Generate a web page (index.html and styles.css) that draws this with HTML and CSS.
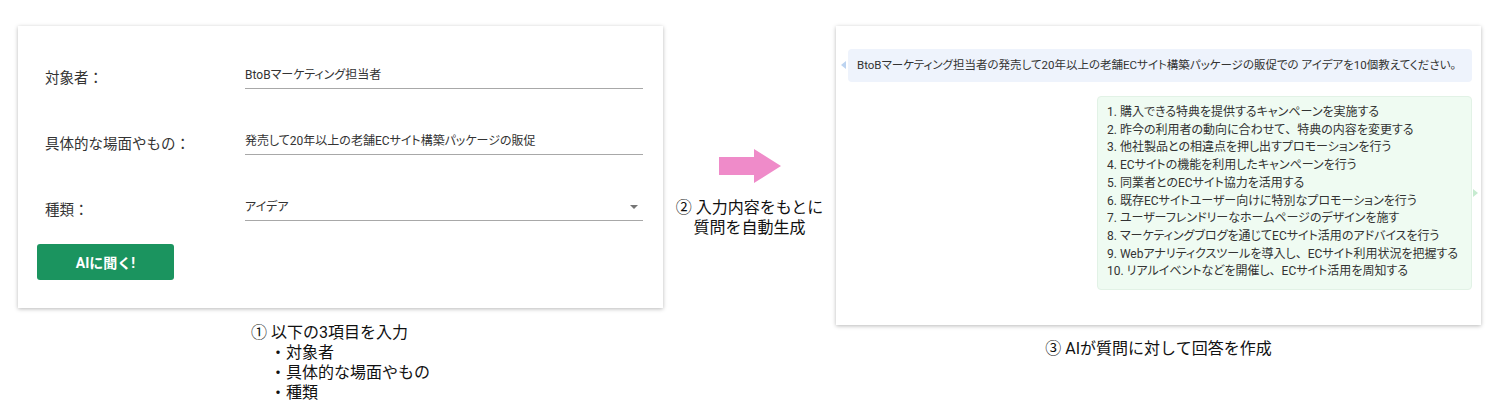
FILE: index.html
```html
<!DOCTYPE html>
<html>
<head>
    <title>AIアイデア生成</title>
    <link rel="stylesheet" href="styles.css">
</head>
<body>
    <div class="page">
        <div class="column">
            <div class="card form-card">
                <div class="row">
                    <label class="label">対象者：</label>
                    <div class="field">BtoBマーケティング担当者</div>
                </div>
                <div class="row">
                    <label class="label">具体的な場面やもの：</label>
                    <div class="field">発売して20年以上の老舗ECサイト構築パッケージの販促</div>
                </div>
                <div class="row">
                    <label class="label">種類：</label>
                    <div class="field select">
                        <span>アイデア</span>
                        <svg class="caret" width="8" height="4" viewBox="0 0 8 4"><polygon points="0,0 8,0 4,4" fill="#757575"/></svg>
                    </div>
                </div>
                <button class="ask">AIに聞く!</button>
            </div>
            <div class="caption">
                <div class="caption-block">
                    <p>① 以下の3項目を入力</p>
                    <p class="item">・対象者</p>
                    <p class="item">・具体的な場面やもの</p>
                    <p class="item">・種類</p>
                </div>
            </div>
        </div>

        <div class="middle">
            <svg class="arrow" width="62" height="34" viewBox="0 0 62 34">
                <polygon points="0,8 35,8 35,0 62,17 35,34 35,26 0,26" fill="#ef8bc9"/>
            </svg>
            <p class="step">② 入力内容をもとに<br>質問を自動生成</p>
        </div>

        <div class="column">
            <div class="card chat-card">
                <div class="bubble question">BtoBマーケティング担当者の発売して20年以上の老舗ECサイト構築パッケージの販促での アイデアを10個教えてください。</div>
                <div class="bubble answer">
                    <p>1. 購入できる特典を提供するキャンペーンを実施する</p>
                    <p>2. 昨今の利用者の動向に合わせて<span class="punct">、</span>特典の内容を変更する</p>
                    <p>3. 他社製品との相違点を押し出すプロモーションを行う</p>
                    <p>4. ECサイトの機能を利用したキャンペーンを行う</p>
                    <p>5. 同業者とのECサイト協力を活用する</p>
                    <p>6. 既存ECサイトユーザー向けに特別なプロモーションを行う</p>
                    <p>7. ユーザーフレンドリーなホームページのデザインを施す</p>
                    <p>8. マーケティングブログを通じてECサイト活用のアドバイスを行う</p>
                    <p>9. Webアナリティクスツールを導入し<span class="punct">、</span>ECサイト利用状況を把握する</p>
                    <p>10. リアルイベントなどを開催し<span class="punct">、</span>ECサイト活用を周知する</p>
                </div>
            </div>
            <div class="caption">
                <p>③ AIが質問に対して回答を作成</p>
            </div>
        </div>
    </div>
</body>
</html>
```

FILE: styles.css
```css
body {
    margin: 0;
    background: #fff;
    font-family: Roboto, "Noto Sans CJK JP", sans-serif;
    color: #333;
}
p {
    margin: 0;
}
.page {
    display: flex;
    padding: 26px 0 0 18px;
}
.column {
    width: 645px;
    display: flex;
    flex-direction: column;
}
.card {
    background: #fff;
    box-shadow: 0 1px 4px rgba(0, 0, 0, 0.28);
}
.form-card {
    padding: 36px 20px 28px 19px;
}
.row {
    display: flex;
    align-items: flex-end;
    margin-left: 8px;
    height: 27px;
}
.row + .row {
    margin-top: 39px;
}
.label {
    width: 200px;
    font-size: 14.5px;
    line-height: 20px;
    color: #333;
}
.field {
    flex: 1;
    height: 26px;
    line-height: 26px;
    font-size: 12px;
    font-feature-settings: "palt";
    color: #333;
    border-bottom: 1px solid #a8a8a8;
}
.select {
    display: flex;
    align-items: center;
    justify-content: space-between;
}
.caret {
    margin-right: 5px;
}
.ask {
    display: block;
    margin-top: 23px;
    width: 137px;
    height: 36px;
    border: none;
    border-radius: 3px;
    background: #1b945f;
    color: #fff;
    font-family: Roboto, "Noto Sans CJK JP", sans-serif;
    font-size: 14px;
    font-weight: bold;
}
.caption {
    margin-top: 15px;
    text-align: center;
    font-size: 16px;
    line-height: 20px;
    color: #111;
}
.caption-block {
    display: inline-block;
    text-align: left;
}
.caption-block .item {
    padding-left: 19px;
}
.middle {
    width: 173px;
    display: flex;
    flex-direction: column;
    align-items: center;
    padding-top: 123px;
}
.step {
    margin-top: 15px;
    text-align: center;
    font-size: 16px;
    line-height: 20px;
    color: #111;
}
.chat-card {
    padding: 23px 9px 35px 12px;
    display: flex;
    flex-direction: column;
    align-items: flex-end;
}
.bubble {
    position: relative;
    border-radius: 4px;
    font-size: 12px;
    font-feature-settings: "palt";
    color: #333;
}
.punct {
    font-feature-settings: normal;
}
.question {
    align-self: stretch;
    height: 33px;
    line-height: 33px;
    padding-left: 9px;
    font-size: 11.5px;
    background: #eef3fc;
}
.question::before {
    content: "";
    position: absolute;
    left: -7px;
    top: 12px;
    border: 4px solid transparent;
    border-right: 5px solid #bcd3f0;
    border-left: none;
}
.answer {
    margin-top: 14px;
    width: 364px;
    padding: 7px 0 8px 9px;
    line-height: 17.7px;
    background: #effbf2;
    border: 1px solid #e2f2e6;
}
.answer::after {
    content: "";
    position: absolute;
    right: -7px;
    top: 92px;
    border: 4px solid transparent;
    border-left: 5px solid #c6ebd0;
    border-right: none;
}
.chat-card + .caption {
    margin-top: 14px;
}
```
